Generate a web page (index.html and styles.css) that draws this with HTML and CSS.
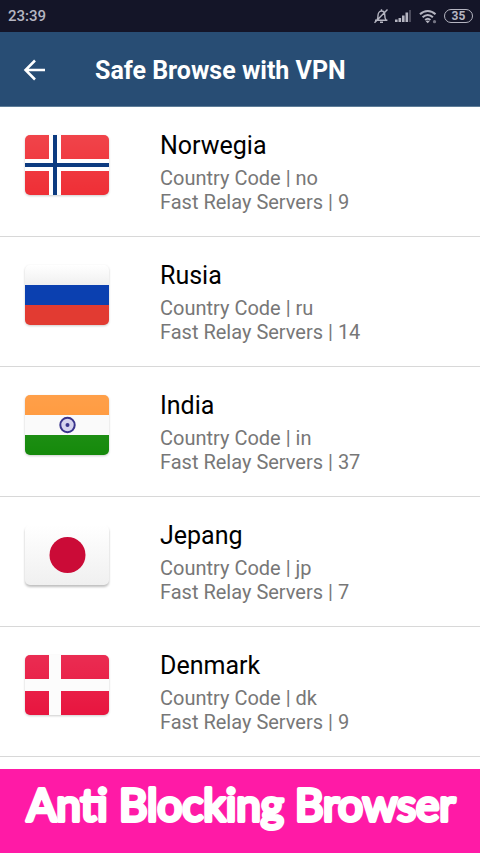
FILE: index.html
```html
<!DOCTYPE html>
<html lang="id">
<head>
<meta charset="utf-8">
<meta name="viewport" content="width=device-width, initial-scale=1">
<title>Safe Browse with VPN</title>
<link rel="stylesheet" href="styles.css">
</head>
<body>
<div class="status">
  <span class="clock">23:39</span>
  <div class="indicators">
    <svg width="14" height="16" viewBox="1 0 14 16" fill="none" stroke="currentColor" stroke-width="1.4" aria-hidden="true">
      <path d="M2 12.200h12.400M4 12c.9-1.200 1-2.500 1-4.500C5 5 6.500 3 8.500 3s3.300 2 3.300 4.500c0 2 .2 3.300 1.200 4.500M8.500 3V1.200M7 14.200h3M14.500 1.500L1.500 14.800"/>
    </svg>
    <svg width="17" height="14" viewBox="0 0 17 14" fill="currentColor" aria-hidden="true">
      <path d="M0 10.500h2.600V13H0zM3.500 9h2.600v4H3.500zM7 6.500h2.600V13H7zM10.500 3.500h2.600V13h-2.600z"/><path opacity=".35" d="M14 1h2v12h-2z"/>
    </svg>
    <svg width="18" height="15" viewBox="0 0 18 15" fill="none" stroke="currentColor" stroke-width="2" aria-hidden="true">
      <path d="M1 5.300C5.500.8 12 .8 16.500 5.300M3.600 8.300c3.200-3 7.200-3 10.300 0M6.200 11c1.600-1.500 3.600-1.500 5.200 0"/><path fill="currentColor" stroke="none" d="M6.700 12.200q2-1.500 4 0L8.700 14.300z"/><circle cx="15.500" cy="12.700" r="1.600" fill="currentColor" stroke="none" opacity=".6"/>
    </svg>
    <span class="battery">35</span>
  </div>
</div>
<header class="appbar">
  <button class="back" aria-label="Back">
    <svg width="24" height="24" viewBox="0 0 24 24" fill="none" stroke="currentColor" stroke-width="2.500" aria-hidden="true"><path d="M23 11H4M13 1.500L3.500 11l9.500 9.500"/></svg>
  </button>
  <h1>Safe Browse with VPN</h1>
</header>
<main>
  <ul class="servers">
    <li>
      <svg class="flag" viewBox="0 0 84 60" role="img" aria-label="Norway">
        <defs>
          <clipPath id="round"><rect width="84" height="60" rx="5"/></clipPath>
          <linearGradient id="shade" x2="0" y2="1"><stop offset="0" stop-color="#fff" stop-opacity=".1"/><stop offset="1" stop-color="#fff" stop-opacity="0"/></linearGradient>
        </defs>
        <g clip-path="url(#round)"><path fill="#ef2f36" d="M0 0h84v60H0z"/><path fill="url(#shade)" d="M0 0h84v60H0z"/><path fill="#fff" d="M24 0h12v60H24zM0 24h84v12H0z"/><path fill="#0d3b80" d="M28 0h4v60h-4zM0 28h84v4H0z"/></g>
      </svg>
      <div><h2>Norwegia</h2><p>Country Code | no</p><p>Fast Relay Servers | 9</p></div>
    </li>
    <li>
      <svg class="flag" viewBox="0 0 84 60" role="img" aria-label="Russia">
        <defs><linearGradient id="white" x2="0" y2="1"><stop offset="0" stop-color="#fff"/><stop offset="1" stop-color="#f0f0f0"/></linearGradient></defs>
        <g clip-path="url(#round)"><path fill="url(#white)" d="M0 0h84v20H0z"/><path fill="#0b40b0" d="M0 20h84v20H0z"/><path fill="#e23b32" d="M0 40h84v20H0z"/></g>
      </svg>
      <div><h2>Rusia</h2><p>Country Code | ru</p><p>Fast Relay Servers | 14</p></div>
    </li>
    <li>
      <svg class="flag" viewBox="0 0 84 60" role="img" aria-label="India">
        <g clip-path="url(#round)"><path fill="#ff9535" d="M0 0h84v20H0z"/><path fill="#fafafa" d="M0 20h84v20H0z"/><path fill="#158a0b" d="M0 40h84v20H0z"/><path fill="url(#shade)" d="M0 0h84v60H0z"/></g>
        <circle cx="42.500" cy="30" r="7.200" fill="#d5d3ee" stroke="#39348c" stroke-width="2"/><circle cx="42.500" cy="30" r="2" fill="#39348c"/>
      </svg>
      <div><h2>India</h2><p>Country Code | in</p><p>Fast Relay Servers | 37</p></div>
    </li>
    <li>
      <svg class="flag flag-light" viewBox="0 0 84 60" role="img" aria-label="Japan">
        <g clip-path="url(#round)"><path fill="url(#white)" d="M0 0h84v60H0z"/></g><circle cx="42.500" cy="30" r="18" fill="#cb0b37"/>
      </svg>
      <div><h2>Jepang</h2><p>Country Code | jp</p><p>Fast Relay Servers | 7</p></div>
    </li>
    <li>
      <svg class="flag" viewBox="0 0 84 60" role="img" aria-label="Denmark">
        <g clip-path="url(#round)"><path fill="#e8153f" d="M0 0h84v60H0z"/><path fill="url(#shade)" d="M0 0h84v60H0z"/><path fill="#fcfcfc" d="M24 0h12v60H24zM0 24h84v12H0z"/></g>
      </svg>
      <div><h2>Denmark</h2><p>Country Code | dk</p><p>Fast Relay Servers | 9</p></div>
    </li>
  </ul>
</main>
<footer class="banner">
  <svg viewBox="0 0 480 84" role="img" aria-label="Anti Blocking Browser"><text x="241" y="52" text-anchor="middle">Anti Blocking Browser</text></svg>
</footer>
</body>
</html>
```
FILE: styles.css
```css
* {
  box-sizing: border-box;
}

body {
  margin: 0;
  min-height: 100vh;
  display: flex;
  flex-direction: column;
  background: #fff;
  font-family: Roboto, "Liberation Sans", sans-serif;
}

h1, h2, p, ul {
  margin: 0;
  padding: 0;
}

.status {
  height: 32px;
  padding: 0 7px 0 8px;
  display: flex;
  align-items: center;
  justify-content: space-between;
  background: #141528;
  color: #b5b5c1;
}

.clock {
  font-size: 15px;
  font-weight: 500;
}

.indicators {
  display: flex;
  align-items: center;
  gap: 7px;
}

.battery {
  width: 29px;
  height: 14px;
  border: 1px solid currentColor;
  border-radius: 7px;
  font-size: 12px;
  font-weight: 700;
  line-height: 12px;
  text-align: center;
}

.appbar {
  height: 75px;
  padding: 3px 22px 0;
  display: flex;
  align-items: center;
  gap: 49px;
  background: #284d74;
  border-bottom: 1px solid #5e7d98;
  color: #fff;
}

.back {
  padding: 0;
  border: 0;
  background: none;
  color: inherit;
  display: flex;
}

h1 {
  font-size: 25px;
  line-height: 32px;
  font-weight: 700;
}

main {
  flex: 1;
}

.servers {
  list-style: none;
}

.servers li {
  height: 130px;
  padding: 23px 25px 0;
  display: flex;
  gap: 51px;
  border-bottom: 1px solid #d8d8d8;
}

.flag {
  width: 84px;
  height: 60px;
  margin-top: 5px;
  flex: none;
  overflow: visible;
  filter: drop-shadow(0 1px 1px rgba(0, 0, 0, 0.2));
}

.flag-light {
  filter: drop-shadow(0 2px 1px rgba(0, 0, 0, 0.25));
}

h2 {
  margin-bottom: 5px;
  font-size: 25px;
  line-height: 31px;
  font-weight: 400;
  color: #000;
}

p {
  font-size: 20px;
  line-height: 24px;
  color: #777;
}

.banner {
  background: #ff1aa6;
}

.banner svg {
  display: block;
  width: 100%;
}

.banner text {
  font-family: Lato, sans-serif;
  font-size: 44px;
  font-weight: 400;
  fill: #fff;
  stroke: #fff;
  stroke-width: 4px;
  stroke-linejoin: round;
}
```
